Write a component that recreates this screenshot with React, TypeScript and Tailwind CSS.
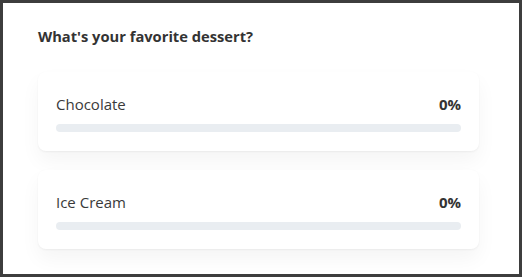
const options = [
  { label: "Chocolate", pct: 0 },
  { label: "Ice Cream", pct: 0 },
];

export default function App() {
  return (
    <div className="h-[277px] w-[522px] border-[3px] border-[#3d3d3d] bg-white font-['Open_Sans',sans-serif] text-[#333]">
      <div className="pl-[35px] pr-[40px] pt-[22px]">
        <h2 className="text-[14.7px] font-bold leading-[22px]">What's your favorite dessert?</h2>
        <div className="mt-[25px] flex flex-col gap-[19px]">
          {options.map((o) => (
            <div
              key={o.label}
              className="rounded-lg bg-white px-[18px] pt-[21px] pb-[19px] shadow-[0_10px_20px_rgba(0,0,0,0.045),0_1px_2px_rgba(0,0,0,0.05)]"
            >
              <div className="flex items-center justify-between leading-[22px]">
                <span className="text-[15px] text-[#3a3a3a]">{o.label}</span>
                <span className="text-[15px] font-bold">{o.pct}%</span>
              </div>
              <div className="mt-[9px] h-2 rounded-full bg-[#e9edf1]">
                <div className="h-2 rounded-full bg-[#3b82f6]" style={{ width: `${o.pct}%` }} />
              </div>
            </div>
          ))}
        </div>
      </div>
    </div>
  );
}
